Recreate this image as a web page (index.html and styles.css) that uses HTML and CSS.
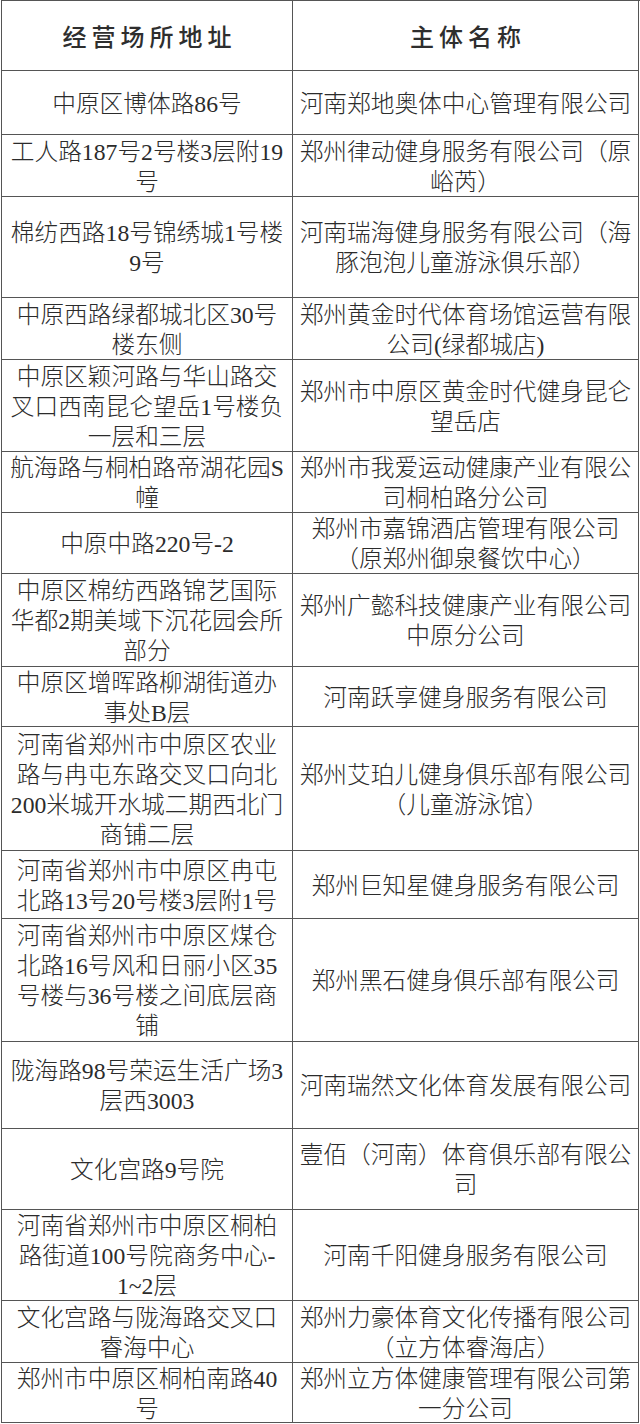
FILE: index.html
```html
<!DOCTYPE html>
<html lang="zh-CN">
<head>
<meta charset="utf-8">
<title>经营场所地址</title>
<link rel="stylesheet" href="styles.css">
</head>
<body>
<div class="sheet">
  <div class="cell head"><span>经营场所地址</span></div>
  <div class="cell head"><span>主体名称</span></div>

  <div class="cell">中原区博体路86号</div>
  <div class="cell">河南郑地奥体中心管理有限公司</div>

  <div class="cell">工人路187号2号楼3层附19<br>号</div>
  <div class="cell">郑州律动健身服务有限公司（原<br>峪芮）</div>

  <div class="cell">棉纺西路18号锦绣城1号楼<br>9号</div>
  <div class="cell">河南瑞海健身服务有限公司（海<br>豚泡泡儿童游泳俱乐部）</div>

  <div class="cell">中原西路绿都城北区30号<br>楼东侧</div>
  <div class="cell">郑州黄金时代体育场馆运营有限<br>公司(绿都城店)</div>

  <div class="cell">中原区颖河路与华山路交<br>叉口西南昆仑望岳1号楼负<br>一层和三层</div>
  <div class="cell">郑州市中原区黄金时代健身昆仑<br>望岳店</div>

  <div class="cell">航海路与桐柏路帝湖花园S<br>幢</div>
  <div class="cell">郑州市我爱运动健康产业有限公<br>司桐柏路分公司</div>

  <div class="cell">中原中路220号-2</div>
  <div class="cell">郑州市嘉锦酒店管理有限公司<br>（原郑州御泉餐饮中心）</div>

  <div class="cell">中原区棉纺西路锦艺国际<br>华都2期美域下沉花园会所<br>部分</div>
  <div class="cell">郑州广懿科技健康产业有限公司<br>中原分公司</div>

  <div class="cell">中原区增晖路柳湖街道办<br>事处B层</div>
  <div class="cell">河南跃享健身服务有限公司</div>

  <div class="cell">河南省郑州市中原区农业<br>路与冉屯东路交叉口向北<br>200米城开水城二期西北门<br>商铺二层</div>
  <div class="cell">郑州艾珀儿健身俱乐部有限公司<br>（儿童游泳馆）</div>

  <div class="cell">河南省郑州市中原区冉屯<br>北路13号20号楼3层附1号</div>
  <div class="cell">郑州巨知星健身服务有限公司</div>

  <div class="cell">河南省郑州市中原区煤仓<br>北路16号风和日丽小区35<br>号楼与36号楼之间底层商<br>铺</div>
  <div class="cell">郑州黑石健身俱乐部有限公司</div>

  <div class="cell">陇海路98号荣运生活广场3<br>层西3003</div>
  <div class="cell">河南瑞然文化体育发展有限公司</div>

  <div class="cell">文化宫路9号院</div>
  <div class="cell">壹佰（河南）体育俱乐部有限公<br>司</div>

  <div class="cell">河南省郑州市中原区桐柏<br>路街道100号院商务中心-<br>1~2层</div>
  <div class="cell">河南千阳健身服务有限公司</div>

  <div class="cell">文化宫路与陇海路交叉口<br>睿海中心</div>
  <div class="cell">郑州力豪体育文化传播有限公司<br>（立方体睿海店）</div>

  <div class="cell">郑州市中原区桐柏南路40<br>号</div>
  <div class="cell">郑州立方体健康管理有限公司第<br>一分公司</div>
</div>
</body>
</html>
```

FILE: styles.css
```css
html, body {
  margin: 0;
  padding: 0;
  background: #ffffff;
}

.sheet {
  margin: 0 0 0 1px;
  width: 639px;
  box-sizing: border-box;
  display: grid;
  grid-template-columns: 291px 346px;
  grid-template-rows: 70px 64px 62px 101px 62px 92px 61px 61px 93px 60px 124px 68px 123px 87px 81px 91px 62px 60px;
  border-top: 1px solid #555555;
  border-left: 1px solid #555555;
  font-family: "Liberation Serif", "Noto Sans CJK SC", serif;
  font-size: 23.7px;
  font-weight: 300;
  line-height: 30px;
  color: #2b2b2b;
}

.cell {
  box-sizing: border-box;
  border-right: 1px solid #555555;
  border-bottom: 1px solid #555555;
  display: flex;
  align-items: center;
  justify-content: center;
  text-align: center;
  white-space: nowrap;
  padding: 2px 2px 0;
}

.head {
  font-family: "Noto Sans CJK SC", sans-serif;
  font-size: 24px;
  font-weight: 500;
  color: #2e2e2e;
  padding: 0 2px;
}

.head span {
  letter-spacing: 5px;
  padding-left: 5px;
}
```
